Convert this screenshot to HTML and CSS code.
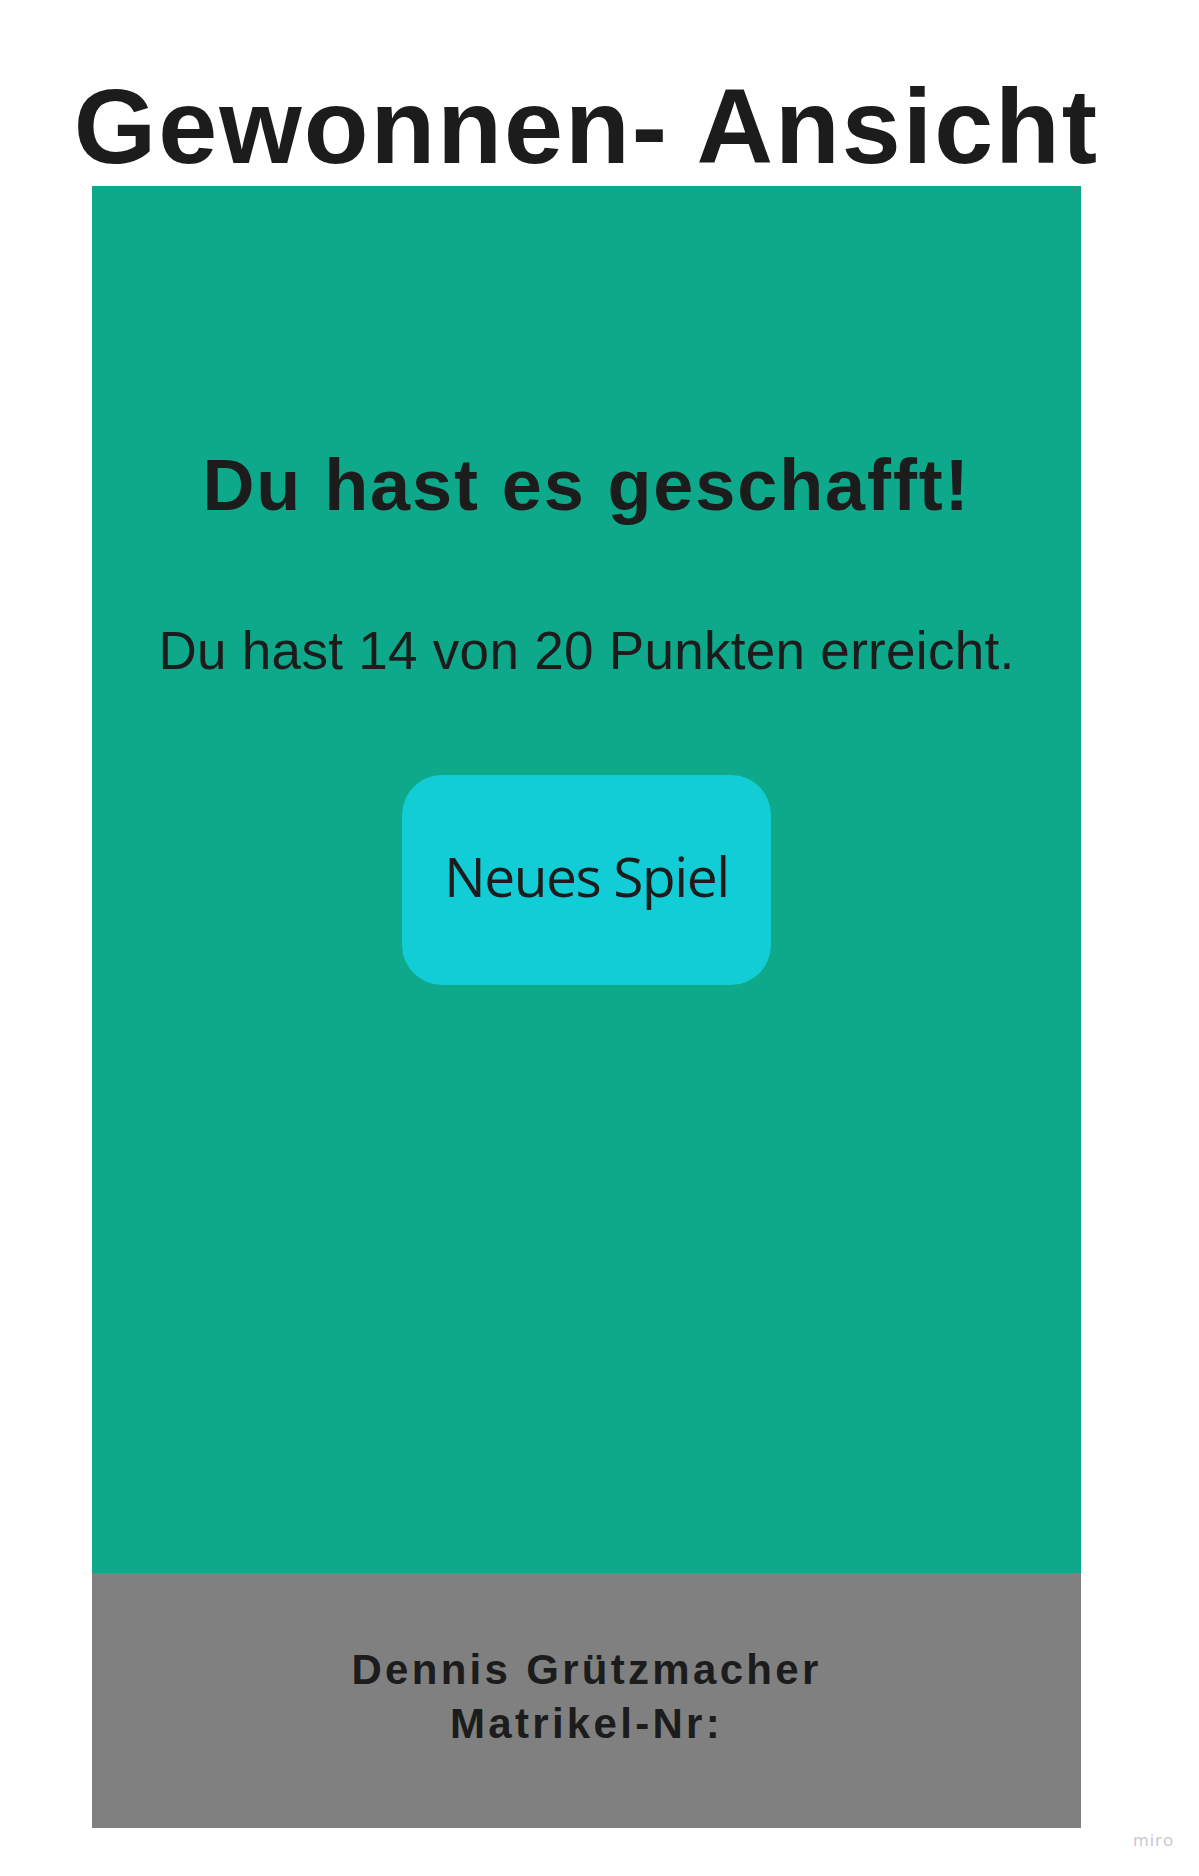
FILE: index.html
```html
<!DOCTYPE html>
<html lang="de">
<head>
<meta charset="utf-8">
<title>Gewonnen- Ansicht</title>
<link rel="stylesheet" href="styles.css">
</head>
<body>
<div class="page">
  <header class="page-header">
    <h1 class="page-title">Gewonnen- Ansicht</h1>
  </header>
  <main class="screen">
    <h2 class="screen-heading">Du hast es geschafft!</h2>
    <p class="screen-score">Du hast 14 von 20 Punkten erreicht.</p>
    <button class="new-game" type="button">Neues Spiel</button>
  </main>
  <footer class="screen-footer">
    <p class="footer-line">Dennis Grützmacher</p>
    <p class="footer-line">Matrikel-Nr:</p>
  </footer>
</div>
<div class="watermark">miro</div>
</body>
</html>
```
FILE: styles.css
```css
html, body {
  margin: 0;
  padding: 0;
  background: #ffffff;
}

body {
  position: relative;
  min-height: 1876px;
  font-family: "Liberation Sans", Arial, sans-serif;
  color: #1c1c1c;
}

.page {
  width: 989px;
  margin-left: 92px;
  display: flex;
  flex-direction: column;
}

.page-header {
  padding-top: 66px;
  display: flex;
  justify-content: center;
  height: 120px;
}

.page-title {
  margin: 0;
  font-size: 106px;
  line-height: 120px;
  font-weight: 700;
  letter-spacing: 2px;
  white-space: nowrap;
  flex-shrink: 0;
  color: #1c1c1c;
}

.screen {
  background: #0ea98a;
  height: 1387px;
  box-sizing: border-box;
  padding-top: 257px;
  display: flex;
  flex-direction: column;
  align-items: center;
}

.screen-heading {
  margin: 0;
  font-size: 72px;
  line-height: 84px;
  font-weight: 700;
  letter-spacing: 1.9px;
  white-space: nowrap;
}

.screen-score {
  margin: 93px 0 0;
  font-size: 53px;
  line-height: 61px;
  font-weight: 400;
  letter-spacing: 0.3px;
  white-space: nowrap;
}

.new-game {
  margin-top: 94px;
  width: 369px;
  height: 210px;
  box-sizing: border-box;
  padding: 0 0 10px;
  border: none;
  border-radius: 40px;
  background: #12cdd5;
  color: #1c1c1c;
  font-family: "Open Sans", "Noto Sans", sans-serif;
  font-size: 55px;
  letter-spacing: -1.4px;
  display: flex;
  align-items: center;
  justify-content: center;
}

.screen-footer {
  background: #808080;
  height: 255px;
  box-sizing: border-box;
  padding-top: 70px;
  display: flex;
  flex-direction: column;
  align-items: center;
}

.footer-line {
  margin: 0;
  font-size: 42px;
  line-height: 54px;
  font-weight: 700;
  letter-spacing: 3.3px;
  white-space: nowrap;
}

.watermark {
  position: absolute;
  left: 1133px;
  top: 1828px;
  font-family: "Open Sans", "Noto Sans", sans-serif;
  font-size: 17px;
  letter-spacing: 1px;
  color: #c6c6d0;
}
```
